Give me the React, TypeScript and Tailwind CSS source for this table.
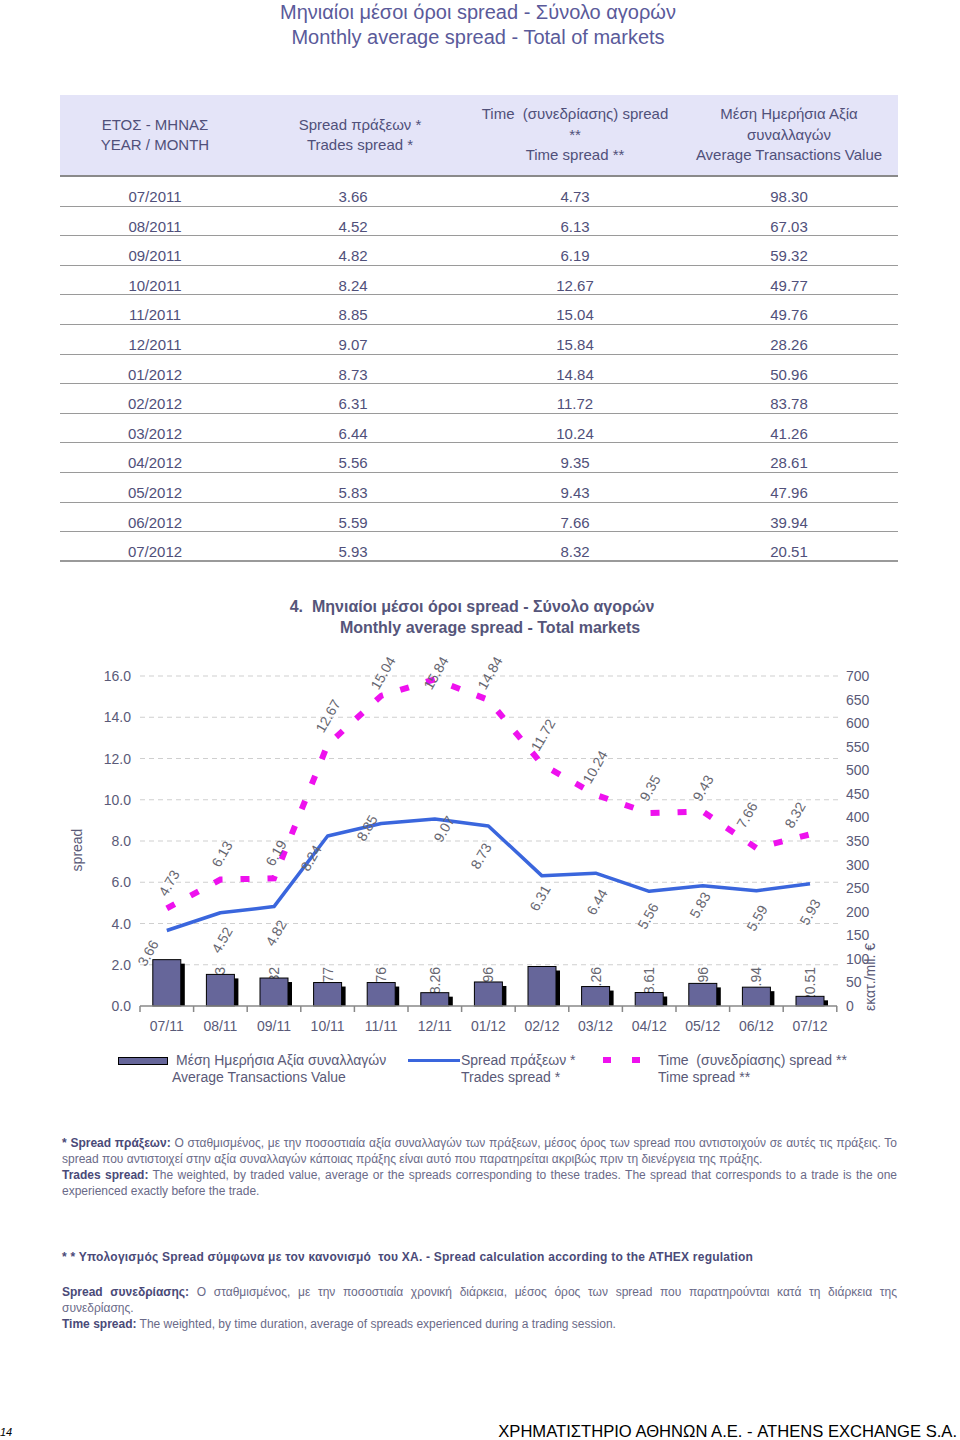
import React from "react";

const months = ["07/2011", "08/2011", "09/2011", "10/2011", "11/2011", "12/2011", "01/2012", "02/2012", "03/2012", "04/2012", "05/2012", "06/2012", "07/2012"];
const cats = ["07/11", "08/11", "09/11", "10/11", "11/11", "12/11", "01/12", "02/12", "03/12", "04/12", "05/12", "06/12", "07/12"];
const trades = [3.66, 4.52, 4.82, 8.24, 8.85, 9.07, 8.73, 6.31, 6.44, 5.56, 5.83, 5.59, 5.93];
const times = [4.73, 6.13, 6.19, 12.67, 15.04, 15.84, 14.84, 11.72, 10.24, 9.35, 9.43, 7.66, 8.32];
const values = [98.3, 67.03, 59.32, 49.77, 49.76, 28.26, 50.96, 83.78, 41.26, 28.61, 47.96, 39.94, 20.51];

// label centres, page coordinates
const timeLabels: [number, number][] = [
  [169, 883], [222, 854], [276, 853], [328, 716], [383, 673], [436, 673], [490, 673],
  [543, 735], [595, 767], [650, 788], [703, 788], [747, 815], [795, 815],
];
const tradeLabels: [number, number][] = [
  [148, 953], [222, 940], [276, 933], [311, 858], [367, 828], [444, 829], [481, 856],
  [540, 898], [597, 902], [648, 916], [700, 905], [757, 918], [810, 912],
];

const T = 645;
const X0 = 140;
const STEP = 53.6;
const Y0 = 1006 - T;
const cx = (i: number) => X0 + STEP * (i + 0.5);
const yl = (v: number) => Y0 - v * 20.625;
const yr = (v: number) => Y0 - (v * 330) / 700;

const Chart = () => (
  <svg width={960} height={405} className="block">
    {[2, 4, 6, 8, 10, 12, 14, 16].map((v) => (
      <line key={v} x1={X0} x2={840} y1={yl(v)} y2={yl(v)} stroke="#cfcfcf" strokeWidth={1} strokeDasharray="5 4" />
    ))}
    {[0, 2, 4, 6, 8, 10, 12, 14, 16].map((v) => (
      <text key={v} x={131} y={yl(v) + 5} textAnchor="end" fontSize={14} fill="#5a5a78">
        {v.toFixed(1)}
      </text>
    ))}
    {Array.from({ length: 15 }, (_, k) => k * 50).map((v) => (
      <text key={v} x={846} y={yr(v) + 5} fontSize={14} fill="#5a5a78">
        {v}
      </text>
    ))}
    <text transform={`translate(82 ${850 - T}) rotate(-90)`} textAnchor="middle" fontSize={14} fill="#5a5a78">
      spread
    </text>
    <text transform={`translate(875 ${977 - T}) rotate(-90)`} textAnchor="middle" fontSize={14} fill="#5a5a78">
      εκατ./mil. €
    </text>

    {values.map((v, i) => (
      <text key={i} transform={`translate(${cx(i) + 5} ${967 - T}) rotate(-90)`} textAnchor="end" fontSize={14} fill="#666670">
        {v.toFixed(2)}
      </text>
    ))}
    {values.map((v, i) => {
      const h = (v * 330) / 700;
      return (
        <g key={i}>
          <rect x={cx(i) - 10} y={Y0 - h + 4} width={28} height={h - 4} fill="#000" />
          <rect x={cx(i) - 14} y={Y0 - h} width={28} height={h} fill="#66669a" stroke="#000" strokeWidth={1} />
        </g>
      );
    })}

    <line x1={X0} x2={837} y1={Y0} y2={Y0} stroke="#888" strokeWidth={1.5} />
    {Array.from({ length: 14 }, (_, k) => (
      <line key={k} x1={X0 + k * STEP} x2={X0 + k * STEP} y1={Y0} y2={Y0 + 6} stroke="#888" strokeWidth={1.5} />
    ))}
    {cats.map((c, i) => (
      <text key={c} x={cx(i)} y={1031 - T} textAnchor="middle" fontSize={14} fill="#5a5a78">
        {c}
      </text>
    ))}

    <polyline
      points={times.map((v, i) => `${cx(i)},${yl(v)}`).join(" ")}
      fill="none"
      stroke="#ee11ee"
      strokeWidth={6}
      strokeDasharray="9 18"
    />
    <polyline
      points={trades.map((v, i) => `${cx(i)},${yl(v)}`).join(" ")}
      fill="none"
      stroke="#3a66dd"
      strokeWidth={3.5}
      strokeLinejoin="round"
    />

    {timeLabels.map(([x, y], i) => (
      <text key={i} transform={`translate(${x} ${y - T}) rotate(-60)`} textAnchor="middle" dominantBaseline="central" fontSize={14} fill="#666670">
        {times[i].toFixed(2)}
      </text>
    ))}
    {tradeLabels.map(([x, y], i) => (
      <text key={i} transform={`translate(${x} ${y - T}) rotate(-60)`} textAnchor="middle" dominantBaseline="central" fontSize={14} fill="#666670">
        {trades[i].toFixed(2)}
      </text>
    ))}
  </svg>
);

const Row = ({ m, i, last }: { m: string; i: number; last: boolean }) => (
  <div
    className={`grid h-[29.6px] grid-cols-[190px_220px_210px_218px] text-center leading-[22px] ${
      last ? "border-b-2 border-[#9a9a9a]" : "border-b border-[#9a9a9a]"
    }`}
  >
    <div className="pt-[9px]">{m}</div>
    <div className="pt-[9px] pr-[14px]">{trades[i].toFixed(2)}</div>
    <div className="pt-[9px]">{times[i].toFixed(2)}</div>
    <div className="pt-[9px]">{values[i].toFixed(2)}</div>
  </div>
);

const App = () => {
  return (
    <div className="flex h-[1440px] w-[960px] flex-col bg-white font-['Liberation_Sans',sans-serif]">
      <div className="text-center text-[20px] leading-[25px] text-[#5a5a9a]">
        <div className="pr-[4px]">Μηνιαίοι μέσοι όροι spread - Σύνολο αγορών</div>
        <div className="pr-[4px]">Monthly average spread - Total of markets</div>
      </div>

      <div className="ml-[60px] mt-[45px] w-[838px] text-[15px] text-[#50507a]">
        <div className="grid h-[82px] grid-cols-[190px_220px_210px_218px] items-center border-b-2 border-[#8a8a8a] bg-[#e4e4f8] text-center leading-[20.5px]">
          <div>
            <div>ΕΤΟΣ - ΜΗΝΑΣ</div>
            <div>YEAR / MONTH</div>
          </div>
          <div>
            <div>Spread πράξεων *</div>
            <div>Trades spread *</div>
          </div>
          <div>
            <div className="whitespace-pre">Time  (συνεδρίασης) spread</div>
            <div>**</div>
            <div>Time spread **</div>
          </div>
          <div>
            <div>Μέση Ημερήσια Αξία</div>
            <div>συναλλαγών</div>
            <div>Average Transactions Value</div>
          </div>
        </div>
        {months.map((m, i) => (
          <Row key={m} m={m} i={i} last={i === months.length - 1} />
        ))}
      </div>

      <div className="mt-[34px] text-center text-[16px] font-bold leading-[21px] text-[#55557a]">
        <div className="whitespace-pre pr-[16px]">4.  Μηνιαίοι μέσοι όροι spread - Σύνολο αγορών</div>
        <div className="pl-[20px]">Monthly average spread - Total markets</div>
      </div>

      <div className="mt-[7px]">
        <Chart />
      </div>

      <div className="mt-[2px] flex pl-[118px] text-[14px] leading-[17px] text-[#5a5a78]">
        <div className="flex w-[290px]">
          <div className="mt-[5px] h-[8px] w-[50px] border border-black bg-[#66669a]" />
          <div className="ml-[8px]">
            <div>Μέση Ημερήσια Αξία συναλλαγών</div>
            <div className="-ml-[4px]">Average Transactions Value</div>
          </div>
        </div>
        <div className="flex w-[195px]">
          <div className="mt-[7px] h-[3px] w-[52px] bg-[#3a66dd]" />
          <div className="ml-[1px]">
            <div>Spread πράξεων *</div>
            <div>Trades spread *</div>
          </div>
        </div>
        <div className="flex">
          <div className="flex w-[55px] gap-[21px]">
            <div className="mt-[5px] h-[6px] w-[8px] bg-[#ee11ee]" />
            <div className="mt-[5px] h-[6px] w-[8px] bg-[#ee11ee]" />
          </div>
          <div>
            <div className="whitespace-pre">Time  (συνεδρίασης) spread **</div>
            <div>Time spread **</div>
          </div>
        </div>
      </div>

      <div className="ml-[62px] mt-[49px] w-[835px] whitespace-nowrap text-[12px] leading-[16px] text-[#6a6a88]">
        <div className="[text-align-last:justify]">
          <b className="text-[#4a4a78]">* Spread πράξεων:</b> Ο σταθμισμένος, με την ποσοστιαία αξία συναλλαγών των πράξεων, μέσος όρος των spread που αντιστοιχούν σε αυτές τις πράξεις. Το
        </div>
        <div>spread που αντιστοιχεί στην αξία συναλλαγών κάποιας πράξης είναι αυτό που παρατηρείται ακριβώς πριν τη διενέργεια της πράξης.</div>
        <div className="[text-align-last:justify]">
          <b className="text-[#4a4a78]">Trades spread:</b> The weighted, by traded value, average or the spreads corresponding to these trades. The spread that corresponds to a trade is the one
        </div>
        <div>experienced exactly before the trade.</div>
      </div>

      <div className="ml-[62px] mt-[50px] whitespace-pre text-[12px] font-bold leading-[16px] tracking-[0.23px] text-[#4a4a78]">
        * * Υπολογισμός Spread σύμφωνα με τον κανονισμό  του ΧΑ. - Spread calculation according to the ATHEX regulation
      </div>

      <div className="ml-[62px] mt-[19px] w-[835px] whitespace-nowrap text-[12px] leading-[16px] text-[#6a6a88]">
        <div className="[text-align-last:justify]">
          <b className="text-[#4a4a78]">Spread συνεδρίασης:</b> Ο σταθμισμένος, με την ποσοστιαία χρονική διάρκεια, μέσος όρος των spread που παρατηρούνται κατά τη διάρκεια της
        </div>
        <div>συνεδρίασης.</div>
        <div>
          <b className="text-[#4a4a78]">Time spread:</b> The weighted, by time duration, average of spreads experienced during a trading session.
        </div>
      </div>

      <div className="mt-auto flex h-[16px] items-center justify-between pr-[3px] text-black">
        <div className="text-[11px] italic">14</div>
        <div className="text-[16.6px] leading-[16px]">ΧΡΗΜΑΤΙΣΤΗΡΙΟ ΑΘΗΝΩΝ Α.Ε. - ATHENS EXCHANGE S.A.</div>
      </div>
    </div>
  );
};

export default App;
